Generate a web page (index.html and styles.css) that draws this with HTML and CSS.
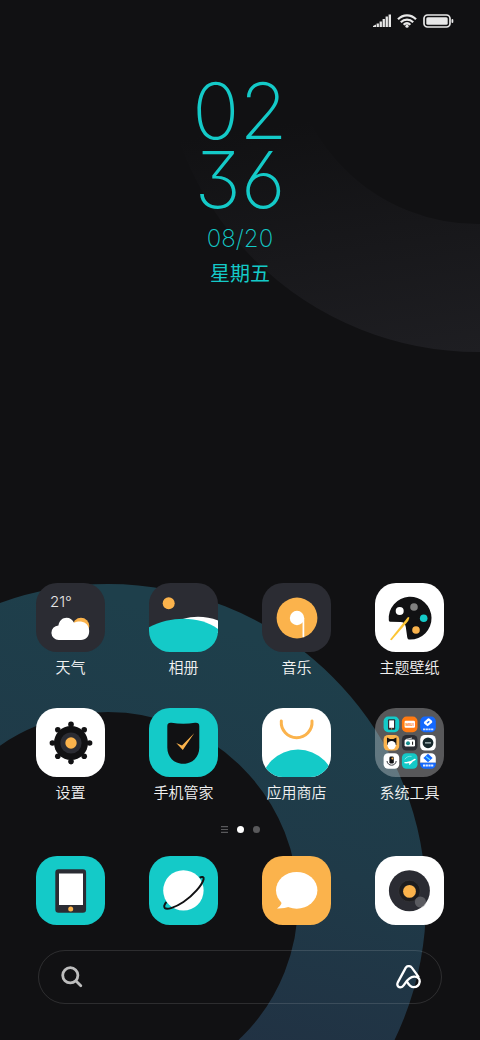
FILE: index.html
```html
<!DOCTYPE html>
<html lang="zh-CN">
<head>
  <meta charset="UTF-8">
  <meta name="viewport" content="width=device-width, initial-scale=1.0">
  <title>桌面</title>
  <link rel="stylesheet" href="styles.css">
</head>
<body>

  <!-- Wallpaper rings -->
  <svg class="wallpaper" viewBox="0 0 480 1040" preserveAspectRatio="xMidYMid slice" aria-hidden="true">
    <defs>
      <linearGradient id="ring-dark" gradientUnits="userSpaceOnUse" x1="440" y1="100" x2="478" y2="352">
        <stop offset="0" stop-color="#111113"/>
        <stop offset="1" stop-color="#1e1e22"/>
      </linearGradient>
      <linearGradient id="ring-teal" gradientUnits="userSpaceOnUse" x1="340" y1="660" x2="230" y2="1060">
        <stop offset="0" stop-color="#1e3f4b"/>
        <stop offset="0.5" stop-color="#1f3a48"/>
        <stop offset="1" stop-color="#213143"/>
      </linearGradient>
    </defs>
    <circle cx="478" cy="35" r="253" fill="none" stroke="url(#ring-dark)" stroke-width="128"/>
    <circle cx="108" cy="902" r="254" fill="none" stroke="url(#ring-teal)" stroke-width="128"/>
  </svg>

  <header class="status-bar">
    <svg width="18" height="14" viewBox="0 0 18 14" fill="#e8e8e8" aria-label="信号">
      <path d="M0 13 V12 L3 10.6 V13Z"/>
      <rect x="3.6" y="9.5" width="2.3" height="3.5"/>
      <rect x="6.6" y="7.5" width="2.3" height="5.5"/>
      <rect x="9.6" y="5" width="2.3" height="8"/>
      <rect x="12.6" y="2.5" width="2.3" height="10.5"/>
      <rect x="15.6" y="0.5" width="2.4" height="12.5"/>
    </svg>
    <svg width="20" height="14" viewBox="0 0 20 14" fill="none" stroke="#e8e8e8" stroke-width="2.2" aria-label="无线网络">
      <path d="M1 5.2 C6 0 14 0 19 5.2"/>
      <path d="M3.8 8.2 C7.3 4.7 12.7 4.7 16.2 8.2"/>
      <path d="M6.6 10.8 C8.6 9 11.4 9 13.4 10.8"/>
      <circle cx="10" cy="12.2" r="1.6" fill="#e8e8e8" stroke="none"/>
    </svg>
    <svg width="31" height="14" viewBox="0 0 31 14" aria-label="电量">
      <rect x="1" y="1" width="26" height="12" rx="3.5" fill="none" stroke="#e8e8e8" stroke-width="1.7"/>
      <rect x="3.3" y="3.3" width="21.4" height="7.4" rx="1.5" fill="#e8e8e8"/>
      <rect x="28.5" y="5" width="1.8" height="4" rx="0.9" fill="#e8e8e8"/>
    </svg>
  </header>

  <main>
    <section class="clock">
      <div class="time">02<br>36</div>
      <div class="date">08/20</div>
      <div class="weekday">星期五</div>
    </section>

    <nav class="apps" aria-label="应用">
      <a class="app" href="#weather">
        <svg class="tile dark" viewBox="0 0 69 69">
          <text class="temp" x="14" y="24">21°</text>
          <circle cx="45" cy="43" r="8.3" fill="#fbb34c"/>
          <path fill="#fff" d="M23 57 A7.3 7.3 0 0 1 22.4 42.4 C23.5 37.5 26.5 34.8 30.5 34.8 C34 34.8 36.8 36.8 38 39.8 C40 38.8 42.5 38.4 45 38.6 C50 39.3 53.2 43 53.2 48 C53.2 53.5 50 57 45 57Z"/>
        </svg>
        <span>天气</span>
      </a>
      <a class="app" href="#gallery">
        <svg class="tile dark" viewBox="0 0 69 69">
          <circle cx="19.7" cy="20.3" r="6" fill="#fbb34c"/>
          <path fill="#fff" d="M34 36 C46 32.5 58 33.5 69 37.5 V50 H34Z"/>
          <path fill="#14cac8" d="M0 44.3 C23 32.5 51 33 69 46 V69 H0Z"/>
        </svg>
        <span>相册</span>
      </a>
      <a class="app" href="#music">
        <svg class="tile dark" viewBox="0 0 69 69">
          <circle cx="35" cy="35" r="20.4" fill="#fbb34c"/>
          <circle cx="35" cy="35" r="7.2" fill="#fff"/>
          <path d="M41.4 35 V54.3" stroke="#fff" stroke-width="1.7"/>
        </svg>
        <span>音乐</span>
      </a>
      <a class="app" href="#themes">
        <svg class="tile white" viewBox="0 0 69 69">
          <path fill="#111113" d="M13.8 37 A21.4 21.4 0 1 1 35 56.6 C33 56.6 32.4 55.6 32.2 54 L30.8 44 C30.4 40.6 28.6 39 25.5 38.9 L15.6 38.8 C14.4 38.8 13.8 38.2 13.8 37Z"/>
          <circle cx="24.7" cy="28" r="4" fill="#fff"/>
          <circle cx="39" cy="24" r="3.8" fill="#808080"/>
          <circle cx="48.7" cy="35.3" r="3.8" fill="#14cac8"/>
          <circle cx="41" cy="47" r="3.8" fill="#fbb34c"/>
          <path fill="#fcc535" d="M34.4 34.6 L33 34 L15 56.5 L16.6 57.2 L33.2 38Z"/>
        </svg>
        <span>主题壁纸</span>
      </a>

      <a class="app" href="#settings">
        <svg class="tile white" viewBox="0 0 69 69">
          <circle cx="35" cy="35" r="17" fill="#111113"/>
          <!-- Round teeth, eight dots around the rim -->
          <g fill="#111113">
            <circle cx="35" cy="16.4" r="2.8"/>
            <circle cx="48.2" cy="21.8" r="2.8"/>
            <circle cx="53.6" cy="35" r="2.8"/>
            <circle cx="48.2" cy="48.2" r="2.8"/>
            <circle cx="35" cy="53.6" r="2.8"/>
            <circle cx="21.8" cy="48.2" r="2.8"/>
            <circle cx="16.4" cy="35" r="2.8"/>
            <circle cx="21.8" cy="21.8" r="2.8"/>
          </g>
          <circle cx="35" cy="35" r="10.6" fill="#2b2c33"/>
          <circle cx="35" cy="35" r="5.7" fill="#fbb34c"/>
        </svg>
        <span>设置</span>
      </a>
      <a class="app" href="#security">
        <svg class="tile teal" viewBox="0 0 69 69">
          <path fill="#111113" d="M18.3 18 C18.3 15.5 20 14.5 22.5 14.8 C30 16 38.5 16 46 14.8 C48.7 14.5 50.3 15.5 50.3 18 V39.5 C50.3 49 43.5 55.8 34.3 55.8 C25 55.8 18.3 49 18.3 39.5Z"/>
          <path fill="#fbb34c" d="M27.2 35 L33 37.6 L45.2 25.2 L33.8 42Z"/>
        </svg>
        <span>手机管家</span>
      </a>
      <a class="app" href="#store">
        <svg class="tile white" viewBox="0 0 69 69">
          <path d="M19.3 13 A15.4 15.4 0 1 0 50 13" fill="none" stroke="#fbb34c" stroke-width="3" stroke-linecap="round"/>
          <circle cx="36" cy="79" r="37.4" fill="#14cac8"/>
        </svg>
        <span>应用商店</span>
      </a>
      <a class="app" href="#tools">
        <svg class="tile folder" viewBox="0 0 69 69">
          <rect x="8.6" y="8.6" width="15.6" height="15.6" rx="4.6" fill="#14cac8"/>
          <rect x="13" y="11.2" width="7.2" height="10.6" rx="1" fill="#2b2c33"/>
          <rect x="14.2" y="12.4" width="4.8" height="7.4" fill="#fff"/>
          <circle cx="16.6" cy="20.8" r="0.6" fill="#fbb34c"/>

          <rect x="26.9" y="8.6" width="15.6" height="15.6" rx="4.6" fill="#ff7a12"/>
          <rect x="29.6" y="12.8" width="10.4" height="7" rx="1.2" fill="#fff"/>
          <text class="mini" x="30.4" y="17.8" fill="#ff7a12">MIUI</text>

          <rect x="45.2" y="8.6" width="15.6" height="15.6" rx="4.6" fill="#1469ff"/>
          <path d="M50.2 14.4 L53.6 11.4 L56 13.4 M50 14.8 L52.6 17 L56.2 14" fill="none" stroke="#fff" stroke-width="2.2" stroke-linejoin="round" stroke-linecap="round"/>
          <path d="M48 21.4 H58.4" stroke="#d5e4ff" stroke-width="1.8" stroke-dasharray="2.2 0.5"/>

          <rect x="8.6" y="26.9" width="15.6" height="15.6" rx="4.6" fill="#fbb34c"/>
          <path fill="#111113" d="M12 29.6 L15 31 H18.4 L21.4 29.6 V37 H12Z"/>
          <circle cx="16.6" cy="37.2" r="4.2" fill="#fff"/>

          <rect x="26.9" y="26.9" width="15.6" height="15.6" rx="4.6" fill="#2b2c33"/>
          <path d="M31 31.4 L37 30" stroke="#fff" stroke-width="0.8"/>
          <rect x="29.6" y="31.6" width="10.4" height="7" rx="1.4" fill="#fff"/>
          <circle cx="33" cy="35.2" r="2" fill="#178d8d"/>
          <path d="M37.6 33.6 V36.8" stroke="#111113"/>

          <rect x="45.2" y="26.9" width="15.6" height="15.6" rx="4.6" fill="#fff"/>
          <circle cx="53" cy="34.8" r="5.4" fill="#17282c"/>
          <path d="M50 34.8 H56" stroke="#b7c6c8" stroke-width="1.2"/>

          <rect x="8.6" y="45.2" width="15.6" height="15.6" rx="4.6" fill="#fff"/>
          <rect x="14.4" y="48.6" width="4.4" height="7" rx="1.4" fill="#111113"/>
          <circle cx="17.4" cy="50.4" r="1" fill="#fbb34c"/>
          <path d="M12 53 C12.6 58.6 20.6 58.6 21.2 53" fill="none" stroke="#34353b"/>

          <rect x="26.9" y="45.2" width="15.6" height="15.6" rx="4.6" fill="#14cac8"/>
          <path d="M30 54.6 C33 55 37.5 53.4 40 51.4 M34.6 56 L37 53.6" fill="none" stroke="#fff" stroke-width="1.4" stroke-linecap="round"/>
          <path d="M29.8 51.4 C31 49.2 34 47.8 36.6 48.4" fill="none" stroke="#a9eeed" stroke-width="0.7"/>

          <path fill="#fff" d="M45.2 54.8 V49.8 A4.6 4.6 0 0 1 49.8 45.2 H56.2 A4.6 4.6 0 0 1 60.8 49.8 V54.8Z"/>
          <path fill="#1469ff" d="M45.2 54.8 H60.8 V56.2 A4.6 4.6 0 0 1 56.2 60.8 H49.8 A4.6 4.6 0 0 1 45.2 56.2Z"/>
          <path fill="#1469ff" d="M48.4 50 L53 45.8 L57.6 50 L53 54.2Z"/>
          <path d="M51 48.6 L53 50.2 L55 51.8" stroke="#5ce0ff" stroke-width="1.2"/>
          <path d="M48 57.4 H58.4" stroke="#e5eeff" stroke-width="2" stroke-dasharray="2.2 0.5"/>
        </svg>
        <span>系统工具</span>
      </a>
    </nav>

    <div class="pager">
      <svg width="7" height="7" viewBox="0 0 7 7" stroke="#59595b" stroke-width="1.2">
        <path d="M0 .6 H7 M0 3.5 H7 M0 6.4 H7"/>
      </svg>
      <i class="dot active"></i>
      <i class="dot"></i>
    </div>

    <nav class="dock" aria-label="快捷栏">
      <a href="#phone" aria-label="电话">
        <svg class="tile teal" viewBox="0 0 69 69">
          <rect x="19.3" y="13.3" width="30.8" height="43.4" rx="3.2" fill="#2b2c33"/>
          <rect x="23" y="17.5" width="24" height="31.5" fill="#fff"/>
          <circle cx="34.7" cy="52.9" r="2.5" fill="#fbb34c"/>
        </svg>
      </a>
      <a href="#browser" aria-label="浏览器">
        <svg class="tile teal" viewBox="0 0 69 69">
          <circle cx="34.4" cy="34.4" r="20.2" fill="#fff"/>
          <path d="M50.6 21.6 C53 20.2 55.2 21 54.6 23.2 C53.2 29 44 39.6 34.4 46 C26 51.6 17.8 54 15.8 52 C14.6 50.6 15.4 48.4 17.4 46" fill="none" stroke="#111113" stroke-width="2"/>
        </svg>
      </a>
      <a href="#messages" aria-label="短信">
        <svg class="tile orange" viewBox="0 0 69 69">
          <ellipse cx="34.7" cy="34.3" rx="20.7" ry="18.4" fill="#fff"/>
          <path fill="#fff" d="M18.6 43.6 C20.6 46.6 19.6 49.6 15 52.4 C19.6 52.6 24 51.8 28.4 50.2Z"/>
        </svg>
      </a>
      <a href="#camera" aria-label="相机">
        <svg class="tile white" viewBox="0 0 69 69">
          <circle cx="34.4" cy="34.7" r="20.5" fill="#2b2c33"/>
          <circle cx="34.4" cy="35" r="10.8" fill="#1c1c1e" stroke="#3a3a3e" stroke-width="0.6"/>
          <circle cx="34.5" cy="35.4" r="6.4" fill="#fbb34c"/>
          <circle cx="45.4" cy="46" r="5.6" fill="#8a8a8e" fill-opacity="0.5"/>
        </svg>
      </a>
    </nav>

    <form class="search">
      <label for="q" aria-label="搜索">
        <svg width="22" height="22" viewBox="0 0 22 22" fill="none" stroke="#bdbdbd" stroke-width="2.8" stroke-linecap="round">
          <circle cx="9.3" cy="9.3" r="7.6"/>
          <path d="M15 15 L19.8 19.8"/>
        </svg>
      </label>
      <input id="q" type="text">
      <button type="button" aria-label="小爱同学">
        <svg width="25" height="24" viewBox="0 0 25 24" fill="none" stroke="#fff" stroke-width="2.3" stroke-linecap="round" stroke-linejoin="round">
          <path d="M22.4 11.6 L15.8 2.6 C14.2 .6 11.2 .6 9.8 2.6 L1.8 17.4 C.2 21 3.2 23.4 6.2 21.8 C9.6 19.4 10.8 12.2 18 11.6 C22 11.4 24 14 23.7 16.8 C23.2 20 20.8 22.2 17.6 22.2 C14.4 22.2 12.6 19.6 10.8 16.4"/>
        </svg>
      </button>
    </form>
  </main>

</body>
</html>
```
FILE: styles.css
```css
* {
  box-sizing: border-box;
}
body {
  margin: 0;
  min-height: 100vh;
  display: flex;
  flex-direction: column;
  background-color: #111113;
  color: #f2f2f2;
  font-family: Roboto, "Noto Sans CJK SC", sans-serif;
}
a {
  color: inherit;
  text-decoration: none;
}
svg {
  display: block;
}
.wallpaper {
  position: absolute;
  top: 0;
  left: 0;
  width: 100%;
  height: 100%;
  z-index: -1;
}
.status-bar {
  display: flex;
  justify-content: flex-end;
  align-items: center;
  gap: 6px;
  height: 42px;
  padding: 0 26px;
}
main {
  flex: 1;
  display: flex;
  flex-direction: column;
  padding: 0 36px 36px;
}

/* Clock */
.clock {
  padding-top: 34px;
  text-align: center;
  color: #14cac8;
}
.time,
.date {
  font-family: Inter, Roboto, sans-serif;
  font-feature-settings: "cv03", "cv05", "cv09"; /* flat-top three */
}
.time {
  font-size: 78px;
  font-weight: 150;
  line-height: 69px;
}
.date {
  margin-top: 10px;
  font-size: 24px;
  font-weight: 150;
  line-height: 30px;
}
.weekday {
  margin-top: 8px;
  font-size: 20px;
  line-height: 24px;
}

/* App grid */
.apps {
  display: grid;
  grid-template-columns: repeat(4, 69px);
  justify-content: space-between;
  row-gap: 29px;
  margin-top: auto;
}
.app {
  display: flex;
  flex-direction: column;
  align-items: center;
  gap: 6px;
  font-size: 15px;
  font-weight: 350;
  line-height: 21px;
  white-space: nowrap;
}
.tile {
  width: 69px;
  height: 69px;
  border-radius: 21px;
}
.dark {
  background-color: #2b2c33;
}
.white {
  background-color: #fff;
}
.teal {
  background-color: #14cac8;
}
.orange {
  background-color: #fbb34c;
}
.folder {
  background-color: rgba(255, 255, 255, 0.3);
}
.temp {
  font-family: Inter, sans-serif;
  font-size: 15px;
  font-weight: 300;
  fill: #e6e6e6;
}
.mini {
  font-size: 4px;
  font-weight: 700;
}

/* Page indicator */
.pager {
  display: flex;
  justify-content: center;
  align-items: center;
  gap: 9px;
  height: 20px;
  margin-top: 15px;
}
.dot {
  width: 7px;
  height: 7px;
  border-radius: 50%;
  background-color: #59595b;
}
.dot.active {
  background-color: #fff;
}

/* Dock */
.dock {
  display: flex;
  justify-content: space-between;
  margin-top: 17px;
}

.search {
  display: flex;
  align-items: center;
  height: 54px;
  margin: 25px 2px 0;
  padding: 0 20px 0 22px;
  border: 1px solid rgba(255, 255, 255, 0.12);
  border-radius: 27px;
}
.search input {
  flex: 1;
  min-width: 0;
  height: 40px;
  margin: 0 12px;
  border: none;
  outline: none;
  background: none;
  color: #fff;
  font-size: 16px;
}
.search button {
  padding: 0;
  border: none;
  background: none;
  cursor: pointer;
}
```
